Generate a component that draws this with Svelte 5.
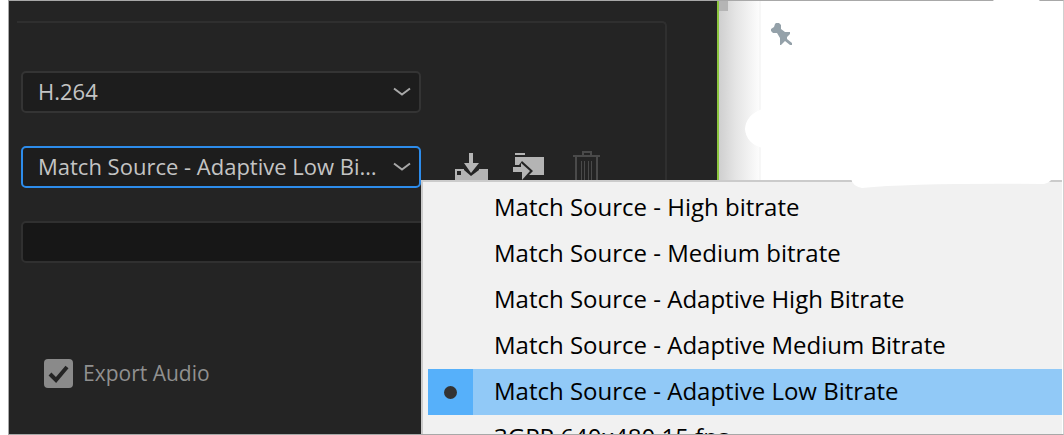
<script lang="ts">
  const presets = [
    'Match Source - High bitrate',
    'Match Source - Medium bitrate',
    'Match Source - Adaptive High Bitrate',
    'Match Source - Adaptive Medium Bitrate',
    'Match Source - Adaptive Low Bitrate',
    '3GPP 640x480 15 fps'
  ];

  let selected = $state('Match Source - Adaptive Low Bitrate');
  let exportAudio = $state(true);
  let comments = $state('');
</script>

<div class="page">
  <div class="window">
    <main class="settings">
      <div class="group">
        <div class="field">
          <select aria-label="Format">
            <option>H.264</option>
          </select>
          <svg class="chevron" width="18" height="10" viewBox="0 0 18 10">
            <path d="M1 1.5 L9 7.5 L17 1.5" />
          </svg>
        </div>

        <div class="row">
          <div class="field active">
            <select aria-label="Preset">
              <option>Match Source - Adaptive Low Bi…</option>
            </select>
            <svg class="chevron" width="18" height="10" viewBox="0 0 18 10">
              <path d="M1 1.5 L9 7.5 L17 1.5" />
            </svg>
          </div>
          <div class="tools">
            <button aria-label="Save preset">
              <svg width="34" height="34" viewBox="0 0 34 34">
                <path fill="#b4b4b4" d="M0 18h33v16H0z" />
                <path fill="#242424" d="M2 20h4v4H2zM9 17h15v2l-8 6-7-6z" />
                <path fill="#b4b4b4" d="M14 2h4v10h6l-8 10-7-10h5z" />
              </svg>
            </button>
            <button aria-label="Import preset">
              <svg width="34" height="34" viewBox="0 0 34 34">
                <path fill="#b4b4b4" d="M2 2h10v2H2zM2 6h29v18H2z" />
                <path fill="#242424" d="M0 14h6l3-4 11 10-9 9H0z" />
                <path fill="#b4b4b4" d="M0 16h8v-4l9 8-8 9V21H0z" />
              </svg>
            </button>
            <button aria-label="Delete preset">
              <svg width="34" height="34" viewBox="0 0 34 34">
                <path
                  fill="none"
                  stroke="#4a4a4a"
                  stroke-width="2"
                  d="M2 5h27M12 4V1h8v3M5 6v28M26 6v28"
                />
                <path fill="none" stroke="#4a4a4a" d="M10.5 10v22M13.5 10v22M17.5 10v22M20.5 10v22" />
              </svg>
            </button>
          </div>
        </div>

        <input class="comments" type="text" aria-label="Comments" bind:value={comments} />

        <label class="check">
          <input type="checkbox" bind:checked={exportAudio} />
          <span class="box">
            {#if exportAudio}
              <svg width="29" height="29" viewBox="0 0 29 29">
                <path d="M6 15 L12 21 L23 8" />
              </svg>
            {/if}
          </span>
          Export Audio
        </label>
      </div>
    </main>

    <div class="edge"><div class="thumb"></div></div>

    <aside class="side">
      <button aria-label="Pin">
        <svg width="22" height="22" viewBox="0 0 22 22">
          <path
            fill="#94a1a9"
            d="M5 0h3l2 2v4l4 3h5v2l-3 3v2l5 4v2h-2l-5-4-2 2-2 2h-1V15L6 10H2L0 8V6l3-2 1-3z"
          />
        </svg>
      </button>
    </aside>
  </div>

  <div class="menu" role="menu">
    {#each presets as preset}
      <button
        class="item"
        class:selected={preset === selected}
        role="menuitemradio"
        aria-checked={preset === selected}
        onclick={() => (selected = preset)}
      >
        <span class="mark">
          {#if preset === selected}<span class="dot"></span>{/if}
        </span>
        <span class="name">{preset}</span>
      </button>
    {/each}
  </div>

  <svg class="smudges" width="320" height="190" viewBox="0 0 320 190" aria-hidden="true">
    <path
      fill="#fff"
      d="M18 109 Q2 115 1 129 Q2 143 18 148 H30 V109zM249 0H296Q290 6 282 6H260Q252 5 249 0zM107 178 Q108 186 118 188 Q170 183 300 184 Q307 182 308 178z"
    />
  </svg>
</div>

<style>
  :global(body) {
    margin: 0;
    background: #fff;
  }

  .page {
    position: relative;
    box-sizing: border-box;
    height: 100vh;
    padding-left: 8px;
    overflow: hidden;
    font-family: 'Open Sans', 'Noto Sans', sans-serif;
  }

  .window {
    display: flex;
    box-sizing: border-box;
    height: 100%;
    border: 1px solid #a8a8a8;
    border-right-color: #d0d0d0;
    overflow: hidden;
  }

  .settings {
    flex: 0 1 708px;
    box-sizing: border-box;
    min-width: 460px;
    padding: 20px 50px 0 8px;
    background: #242424;
  }

  .group {
    box-sizing: border-box;
    height: 100%;
    padding: 48px 0 0 4px;
    border-top: 2px solid #2f2f2f;
    border-right: 2px solid #2f2f2f;
    border-top-right-radius: 5px;
  }

  .field {
    position: relative;
    width: 400px;
    height: 42px;
  }

  .field select {
    box-sizing: border-box;
    width: 100%;
    height: 100%;
    padding: 0 34px 2px 15px;
    border: 2px solid #343434;
    border-radius: 5px;
    background: #1d1d1d;
    color: #c4c4c4;
    font-family: inherit;
    font-size: 22px;
    appearance: none;
    outline: none;
  }

  .field.active select {
    border-color: #2d8ceb;
  }

  .chevron {
    position: absolute;
    right: 10px;
    top: 16px;
    pointer-events: none;
  }

  .chevron path {
    fill: none;
    stroke: #a8a8a8;
    stroke-width: 2;
  }

  .row {
    display: flex;
    gap: 34px;
    margin-top: 33px;
  }

  .tools {
    display: flex;
    align-items: flex-start;
    gap: 24px;
    padding-top: 5px;
  }

  button {
    display: block;
    padding: 0;
    border: 0;
    background: none;
    font: inherit;
  }

  button svg {
    display: block;
  }

  .comments {
    display: block;
    box-sizing: border-box;
    width: 100%;
    max-width: 580px;
    height: 42px;
    margin-top: 33px;
    padding: 0 15px;
    border: 2px solid #303030;
    border-radius: 5px;
    background: #171717;
    color: #c4c4c4;
    font: inherit;
    font-size: 22px;
  }

  .check {
    display: flex;
    align-items: center;
    gap: 10px;
    width: fit-content;
    margin: 96px 0 0 23px;
    color: #909090;
    font-size: 21px;
    line-height: 29px;
  }

  .check input {
    position: absolute;
    opacity: 0;
  }

  .box {
    width: 29px;
    height: 29px;
    border-radius: 4px;
    background: #8a8a8a;
  }

  .box svg {
    display: block;
  }

  .box path {
    fill: none;
    stroke: #242424;
    stroke-width: 4;
  }

  .edge {
    flex: 0 0 40px;
    border-left: 2px solid #8dc63f;
    border-right: 2px solid #f7f7f7;
    background: linear-gradient(to right, #cfcfcf, #e4e4e4 40%, #fcfcfc);
  }

  .thumb {
    width: 9px;
    height: 10px;
    background: #b5b5b5;
  }

  .side {
    flex: 1;
    padding: 22px 10px;
    background: #fff;
  }

  .menu {
    position: absolute;
    top: 180px;
    right: 2px;
    bottom: 1px;
    left: 421px;
    padding: 3px 0 0 5px;
    border-top: 2px solid #cbcbcb;
    border-left: 2px solid #cbcbcb;
    background: #f1f1f1;
    overflow: hidden;
  }

  .item {
    display: flex;
    width: 100%;
    height: 46px;
    color: #000;
    font-size: 24px;
    line-height: 44px;
    text-align: left;
    white-space: nowrap;
  }

  .item.selected {
    background: #91c9f7;
  }

  .mark {
    display: grid;
    flex: 0 0 45px;
    height: 46px;
    margin-right: 21px;
    place-items: center;
  }

  .selected .mark {
    background: #56b0fa;
  }

  .dot {
    width: 13px;
    height: 13px;
    border-radius: 50%;
    background: #333;
  }

  .smudges {
    position: absolute;
    top: 0;
    left: 744px;
    pointer-events: none;
  }
</style>
